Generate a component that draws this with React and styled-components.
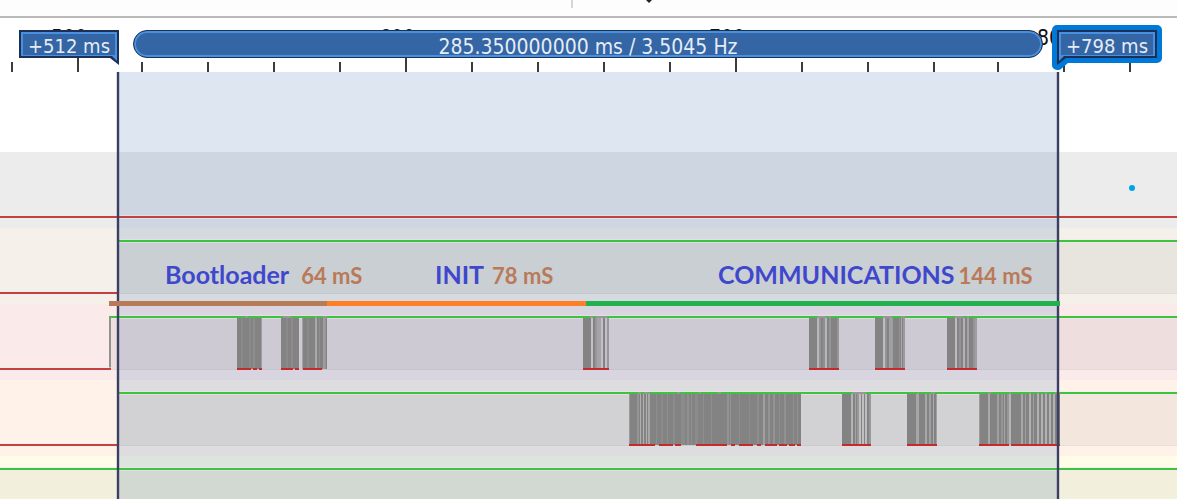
import React from 'react'
import styled, { createGlobalStyle } from 'styled-components'

const GlobalStyle = createGlobalStyle`
  * {
    box-sizing: border-box;
  }

  body {
    margin: 0;
    background: #ffffff;
    font-family: 'DejaVu Sans Condensed', 'DejaVu Sans', sans-serif;
  }
`

// width of the visible time window, in timeline units
const SPAN = 1177
const START = 118
const END = 1058

const at = (x) => `${(x / SPAN) * 100}%`

const Page = styled.main`
  display: flex;
  flex-direction: column;
  height: 100vh;
  overflow: hidden;
`

const Toolbar = styled.header`
  display: flex;
  flex: none;
  height: 18px;
  padding-left: 48.5%;
  gap: 72px;
  background: #fdfdfd;
  border-bottom: 2px solid #bababa;
`

const Divider = styled.span`
  width: 2px;
  height: 8px;
  background: #d6d6d6;
`

const Ruler = styled.div`
  position: relative;
  flex: none;
  height: 54px;
`

const Ticks = styled.svg`
  display: block;
  width: 100%;
  height: 54px;
`

const TickLabel = styled.span`
  position: absolute;
  top: 8px;
  margin-left: -27px;
  color: #111111;
  font-size: 21px;
  line-height: 24px;
`

const Measure = styled.div`
  position: absolute;
  top: 12px;
  height: 28px;
  border: 1px solid #1c3156;
  border-radius: 14px;
  background: #3465a4;
  box-shadow: inset 0 0 0 2px #4a90e0;
  color: #e6ecf5;
  font-size: 21px;
  line-height: 32px;
  text-align: center;
  white-space: nowrap;
`

const Marker = styled.button`
  position: absolute;
  top: 12px;
  width: 100px;
  height: 28px;
  margin-left: ${({ $flip }) => ($flip ? '-1px' : '-99px')};
  padding: 0;
  border: 0;
  background: none;
  color: #e6ecf5;
  font-family: inherit;
  font-size: 20px;
  line-height: 32px;
  white-space: nowrap;
`

const MarkerText = styled.span`
  position: relative;
`

const Flag = styled.svg`
  position: absolute;
  top: 0;
  left: 0;
  overflow: visible;
`

const Plot = styled.section`
  position: relative;
  flex: 1;
  min-height: 0;
  overflow: hidden;
`

const Channel = styled.div`
  height: ${({ $height }) => $height || 76}px;
  background: ${({ $color }) => $color};
`

const Wave = styled.svg`
  position: relative;
  z-index: 1;
  display: block;
  width: 100%;
  height: 76px;
`

const Selection = styled.div`
  position: absolute;
  top: 0;
  bottom: 0;
  background: rgba(86, 132, 186, 0.2);
`

const Cursor = styled.div`
  position: absolute;
  z-index: 2;
  top: 0;
  bottom: 0;
  width: 2px;
  margin-left: -1px;
  background: #3a4064;
  box-shadow: 0 0 0 1px rgba(58, 64, 100, 0.2);
`

const Phases = styled.div`
  position: absolute;
  z-index: 3;
  top: 184px;
  display: grid;
  grid-template-columns: minmax(0, 218fr) minmax(0, 259fr) minmax(0, 474fr);
`

const Phase = styled.div`
  display: flex;
  align-items: baseline;
  gap: ${({ $gap }) => $gap}px;
  height: 50px;
  padding-left: ${({ $indent }) => $indent}px;
  border-bottom: 5px solid ${({ $color }) => $color};
  font-family: Lato, sans-serif;
  font-weight: 700;
  line-height: 36px;
  white-space: nowrap;
`

const PhaseName = styled.span`
  color: #3f48cc;
  font-size: 25px;
`

const PhaseTime = styled.span`
  color: #b97a57;
  font-size: 22px;
`

const Dot = styled.span`
  position: absolute;
  z-index: 3;
  top: 113px;
  width: 6px;
  height: 6px;
  margin-left: -3px;
  border-radius: 50%;
  background: #00a2e8;
`

const ticks = [12, 78, 142, 208, 274, 340, 406, 472, 538, 604, 670, 736, 802, 868, 934, 998, 1064, 1130]

const tickLabels = [
  { x: 78, text: '500' },
  { x: 406, text: '600' },
  { x: 736, text: '700' },
  { x: 1064, text: '800' }
]

const phases = [
  { name: 'Bootloader', time: '64 mS', indent: 56, gap: 12, color: '#b97a57' },
  { name: 'INIT', time: '78 mS', indent: 108, gap: 8, color: '#ff7f27' },
  { name: 'COMMUNICATIONS', time: '144 mS', indent: 132, gap: 4, color: '#22b14c' }
]

// stripes: [x, width, shade], low: [from, to] of the red base line
const rxBursts = [
  {
    from: 237,
    to: 262,
    stripes: [[241, 2, '#8a8a8a'], [249, 2, '#8a8a8a'], [253, 2, '#8d8d8d'], [261, 1, '#a09da2']],
    low: [[237, 251], [253, 257], [259, 262]],
    gaps: [[245, 248]]
  },
  {
    from: 281,
    to: 299,
    stripes: [[286, 2, '#8a8a8a'], [291, 2, '#8d8d8d']],
    low: [[281, 293], [295, 299]],
    gaps: [[283, 291]]
  },
  {
    from: 302,
    to: 327,
    stripes: [[302, 1, '#a4a1a6'], [307, 2, '#8a8a8a'], [315, 2, '#aaa8ac'], [319, 1, '#8f8f8f'], [323, 2, '#a09da2'], [325, 1, '#959595']],
    low: [[303, 322]],
    gaps: [[315, 317], [323, 327]]
  },
  {
    from: 583,
    to: 609,
    stripes: [[591, 2, '#c4c0ca'], [595, 2, '#999799'], [597, 4, '#a5a2a8'], [601, 2, '#c4c0ca'], [605, 2, '#c4c0ca'], [607, 2, '#999799']],
    low: [[583, 609]],
    gaps: [[590, 593], [596, 607]]
  },
  {
    from: 809,
    to: 839,
    stripes: [[817, 2, '#b8b5bd'], [819, 2, '#939393'], [823, 2, '#8f8f8f'], [825, 2, '#b8b5bd'], [829, 2, '#949494'], [837, 2, '#969496']],
    low: [[809, 839]],
    gaps: [[817, 826], [829, 831]]
  },
  {
    from: 875,
    to: 905,
    stripes: [[883, 2, '#c0bcc6'], [885, 2, '#949494'], [889, 4, '#a09ea3'], [899, 1, '#949494'], [901, 1, '#aaa7ad'], [903, 2, '#9c9a9f']],
    low: [[875, 905]],
    gaps: [[883, 892], [901, 905]]
  },
  {
    from: 947,
    to: 977,
    stripes: [[955, 2, '#bebac4'], [959, 2, '#939393'], [963, 2, '#b3b0b7'], [967, 2, '#a5a2a8'], [973, 2, '#959595'], [975, 2, '#9f9ca2']],
    low: [[947, 977]],
    gaps: [[955, 963], [967, 969]]
  }
]

const txBursts = [
  {
    from: 629,
    to: 801,
    stripes: [
      [629, 1, '#9a9a9a'], [637, 2, '#959595'], [640, 1, '#b0b0b0'], [643, 1, '#b0b0b0'], [646, 1, '#b0b0b0'], [648, 2, '#a8a8a8'],
      [656, 1, '#8e8e8e'], [661, 2, '#8b8b8b'], [667, 1, '#8f8f8f'], [673, 2, '#8b8b8b'], [681, 4, '#8b8b8b'], [687, 2, '#909090'],
      [691, 1, '#909090'], [695, 3, '#8b8b8b'], [703, 1, '#8e8e8e'], [711, 1, '#8e8e8e'], [727, 2, '#939393'], [730, 1, '#939393'],
      [739, 1, '#8d8d8d'], [749, 1, '#8c8c8c'], [757, 2, '#8e8e8e'], [763, 2, '#a0a0a0'], [768, 2, '#949494'], [773, 2, '#949494'],
      [779, 1, '#8e8e8e'], [784, 2, '#919191'], [793, 1, '#909090'], [797, 1, '#919191']
    ],
    low: [[629, 655], [659, 673], [675, 681], [696, 727], [731, 735], [739, 753], [757, 761], [765, 777], [779, 787], [789, 795], [797, 801]],
    gaps: [[638, 641], [644, 649], [677, 680], [699, 701], [718, 721]]
  },
  {
    from: 842,
    to: 871,
    stripes: [[851, 2, '#b4b4b4'], [855, 1, '#a4a4a4'], [857, 2, '#999999'], [859, 2, '#c0c0c0'], [862, 2, '#c0c0c0'], [865, 2, '#bebebe'], [869, 2, '#999999']],
    low: [[842, 871]],
    gaps: [[852, 866]]
  },
  {
    from: 907,
    to: 937,
    stripes: [[916, 3, '#a6a6a6'], [925, 2, '#a8a8a8'], [929, 2, '#a0a0a0'], [933, 1, '#aaaaaa'], [936, 1, '#a0a0a0']],
    low: [[907, 937]],
    gaps: [[917, 919], [931, 935]]
  },
  {
    from: 979,
    to: 1060,
    stripes: [
      [979, 1, '#9c9c9c'], [988, 2, '#aaaaaa'], [997, 2, '#a0a0a0'], [1001, 2, '#959595'], [1004, 1, '#a5a5a5'], [1007, 2, '#979797'],
      [1009, 2, '#b4b4b4'], [1021, 2, '#a8a8a8'], [1025, 1, '#a0a0a0'], [1029, 2, '#b0b0b0'], [1033, 1, '#a0a0a0'], [1037, 2, '#b0b0b0'],
      [1041, 2, '#b2b2b2'], [1045, 2, '#b2b2b2'], [1049, 2, '#b2b2b2'], [1053, 2, '#b2b2b2']
    ],
    low: [[979, 1009], [1011, 1060]],
    gaps: [[988, 991], [1009, 1011], [1029, 1031], [1037, 1039], [1045, 1047], [1055, 1060]]
  }
]

const channels = [
  { color: '#ececec', low: [[0, SPAN]], high: [] },
  { color: '#f5f1ea', low: [[0, START]], high: [[START, SPAN]] },
  { color: '#fbeaea', low: [[0, 111]], high: [[109, SPAN]], edge: 109, bursts: rxBursts },
  { color: '#fff3e9', low: [[0, START]], high: [[START, SPAN]], bursts: txBursts },
  { color: '#fffde8', low: [], high: [[0, SPAN]] }
]

const Burst = ({ from, to, stripes, low, gaps }) => (
  <g>
    <rect x={from} y="14" width={to - from} height="51" fill="#838383" />
    {stripes.map(([x, width, shade]) => (
      <rect key={x} x={x} y="14" width={width} height="51" fill={shade} />
    ))}
    {gaps.map(([a, b]) => (
      <rect key={a} x={a} y="12" width={b - a} height="2" fill="#969896" />
    ))}
    {low.map(([a, b]) => (
      <rect key={a} x={a} y="64" width={b - a} height="2" fill="#c22b2b" />
    ))}
  </g>
)

const Signal = ({ low, high, edge, bursts = [] }) => (
  <Wave viewBox={`0 0 ${SPAN} 76`} preserveAspectRatio="none" aria-hidden="true">
    {high.map(([a, b]) => (
      <g key={a}>
        <rect x={a} y="14" width={b - a} height="52" fill="#282820" fillOpacity="0.06" />
        <rect x={a} y="65" width={b - a} height="1" fill="#000000" fillOpacity="0.03" />
        <rect x={a} y="11" width={b - a} height="4" fill="#f4e4f4" fillOpacity="0.5" />
        <rect x={a} y="12" width={b - a} height="2" fill="#3cc43c" />
      </g>
    ))}
    {edge && <rect x={edge} y="13" width="2" height="52" fill="#949090" />}
    {low.map(([a, b]) => (
      <g key={a}>
        <rect x={a} y="63" width={b - a} height="4" fill="#dcf4f4" fillOpacity="0.5" />
        <rect x={a} y="64" width={b - a} height="2" fill="#c83f3f" />
      </g>
    ))}
    {bursts.map((burst) => (
      <Burst key={burst.from} {...burst} />
    ))}
  </Wave>
)

const StartFlag = () => (
  <Flag width="100" height="36" viewBox="0 0 100 36" aria-hidden="true">
    <path d="M0 0H100V35L91 28H0Z" fill="#1b2f57" />
    <path d="M2 2H98V31L93 26H2Z" fill="#4a90e0" />
    <path d="M4 4H96V25H4Z" fill="#3465a4" />
  </Flag>
)

const EndFlag = () => (
  <Flag width="100" height="36" viewBox="0 0 100 36" aria-hidden="true">
    <path d="M0 0H100V28H9L1 35H0Z" fill="#0078d7" stroke="#0078d7" strokeWidth="10" strokeLinejoin="round" />
    <path d="M0 0H100V28H9L0 35Z" fill="#1b2f57" />
    <path d="M2 2H98V26H7L2 31Z" fill="#4a90e0" />
    <path d="M4 4H96V25H4Z" fill="#3465a4" />
  </Flag>
)

const App = () => {
  return (
    <Page>
      <GlobalStyle />
      <Toolbar>
        <Divider />
        <svg width="8" height="3" viewBox="0 0 8 3" aria-hidden="true">
          <path d="M1 0H7L4 3Z" fill="#222222" />
        </svg>
      </Toolbar>
      <Ruler>
        <Ticks viewBox={`0 0 ${SPAN} 54`} preserveAspectRatio="none" aria-hidden="true">
          {ticks.map((x) => {
            const major = tickLabels.some((label) => label.x === x)
            return <rect key={x} x={x - 1} y={major ? 38 : 44} width="2" height={major ? 16 : 10} fill="#3c3c3c" />
          })}
        </Ticks>
        {tickLabels.map(({ x, text }) => (
          <TickLabel key={x} style={{ left: at(x) }}>
            {text}
          </TickLabel>
        ))}
        <Measure style={{ left: at(START + 15), right: at(SPAN - END + 15) }}>
          285.350000000 ms / 3.5045 Hz
        </Measure>
        <Marker type="button" style={{ left: at(START) }}>
          <StartFlag />
          <MarkerText>+512 ms</MarkerText>
        </Marker>
        <Marker type="button" $flip style={{ left: at(END) }}>
          <EndFlag />
          <MarkerText>+798 ms</MarkerText>
        </Marker>
      </Ruler>
      <Plot>
        <Channel $color="#ffffff" $height={80} />
        {channels.map(({ color, ...signal }) => (
          <Channel key={color} $color={color}>
            <Signal {...signal} />
          </Channel>
        ))}
        <Selection style={{ left: at(START), right: at(SPAN - END) }} />
        <Cursor style={{ left: at(START) }} />
        <Cursor style={{ left: at(END) }} />
        <Phases style={{ left: at(109), right: at(SPAN - 1060) }}>
          {phases.map(({ name, time, indent, gap, color }) => (
            <Phase key={name} $indent={indent} $gap={gap} $color={color}>
              <PhaseName>{name}</PhaseName>
              <PhaseTime>{time}</PhaseTime>
            </Phase>
          ))}
        </Phases>
        <Dot style={{ left: at(1132) }} />
      </Plot>
    </Page>
  )
}

export default App
